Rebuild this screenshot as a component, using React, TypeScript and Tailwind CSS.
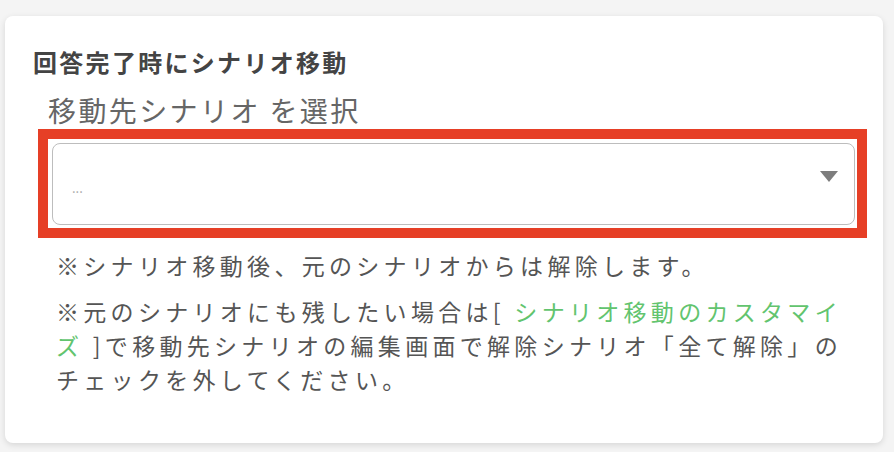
import React from 'react';

// シナリオ移動の設定カード
const App = () => {
  return (
    <div
      className="w-[894px] h-[452px] bg-[#f4f4f4] pt-4 pl-[5px] overflow-hidden"
      style={{ fontFamily: '"Noto Sans CJK JP", "Noto Sans", sans-serif' }}
    >
      <div className="w-[878px] h-[427px] bg-white rounded-lg shadow-[0_2px_6px_rgba(0,0,0,0.12)] pl-[28px] pt-[31px]">
        <h2 className="text-[24px] leading-[30px] font-bold text-[#444] tracking-[2.3px]">
          回答完了時にシナリオ移動
        </h2>

        <div className="pl-[15px] mt-[15px] text-[28px] leading-[36px] text-[#666] tracking-[2.4px]">
          移動先シナリオ を選択
        </div>

        <div className="ml-[5px] mt-[1px] w-[829px] h-[109px] border-[10px] border-[#e63f26] pt-[4px] pl-[4px]">
          <div className="w-[803px] h-[82px] rounded-lg border-[1.5px] border-[#bdbdbd] flex items-center justify-between pl-[19px] pr-[16px]">
            <span className="text-[13px] text-[#a6a6a6] mt-[8px]">...</span>
            <svg width="18" height="11" viewBox="0 0 18 11" className="mt-[-16px]">
              <polygon points="0,0 18,0 9,11" fill="#7d7d7d" />
            </svg>
          </div>
        </div>

        <div className="pl-[23px] pt-[10px] text-[23px] leading-[34px] text-[#555] tracking-[4.3px]">
          <p>※シナリオ移動後、元のシナリオからは解除します。</p>
          <p className="mt-[12px] whitespace-nowrap">
            ※元のシナリオにも残したい場合は[ <span className="text-[#62c46e]">シナリオ移動のカスタマイ</span>
            <br />
            <span className="text-[#62c46e]">ズ</span> ]で移動先シナリオの編集画面で解除シナリオ「全て解除」の
            <br />
            チェックを外してください。
          </p>
        </div>
      </div>
    </div>
  );
};

export default App;
